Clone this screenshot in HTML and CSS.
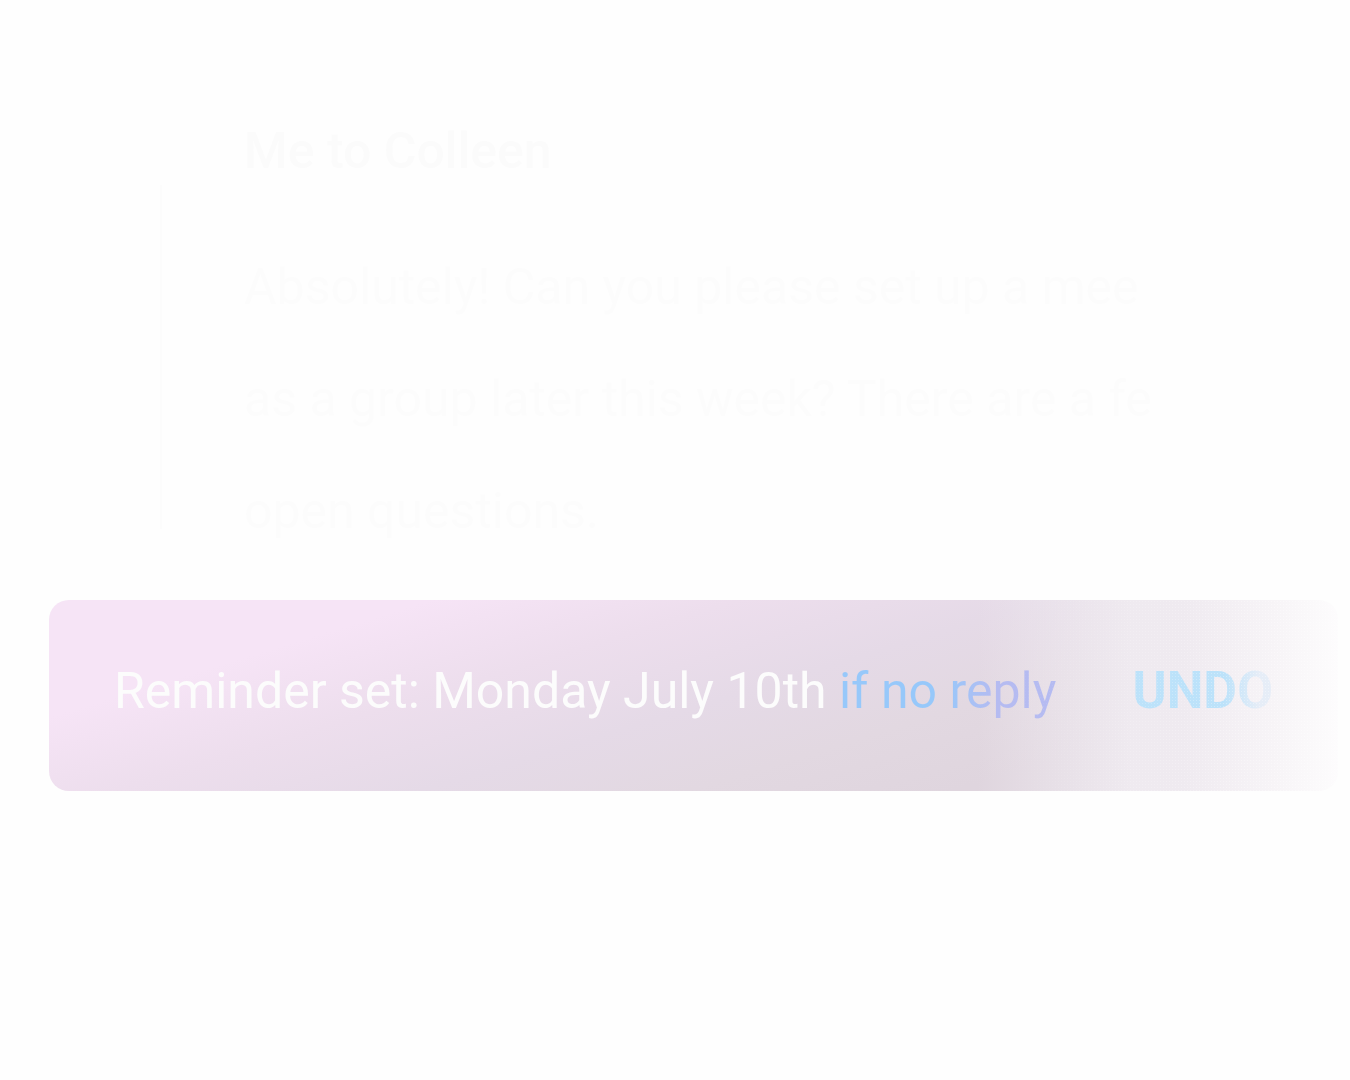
FILE: index.html
```
<!DOCTYPE html>
<html lang="en">
<head>
  <meta charset="UTF-8" />
  <title>Reminder set</title>
  <meta name="viewport" content="width=device-width, initial-scale=1.0" />
  <link rel="stylesheet" href="styles.css">
</head>
<body>
  <main class="thread">
    <article class="message">
      <h2>Me to Colleen</h2>
      <div class="message-body">
        <p>Absolutely! Can you please set up a mee</p>
        <p>as a group later this week? There are a fe</p>
        <p>open questions.</p>
      </div>
    </article>

    <div class="toast" role="status">
      <p>Reminder set: Monday July 10th <a href="#">if no reply</a></p>
      <button type="button">UNDO</button>
    </div>
  </main>
</body>
</html>
```

FILE: styles.css
```
* {
  margin: 0;
  padding: 0;
  box-sizing: border-box;
  font-family: Roboto, 'Liberation Sans', sans-serif;
}

body {
  background-color: #fefefe;
  min-height: 100vh;
}

.thread {
  padding: 121px 12px 0 49px;
}

.message {
  margin: 0 180px 0 111px;
  padding-left: 84px;
  /* thread line beside the message */
  background: linear-gradient(#fcfcfc, #fcfcfc) 0 64px / 2px 344px no-repeat;
}

.message h2 {
  font-size: 50px;
  line-height: 60px;
  font-weight: 500;
  color: #fbfbfb;
}

.message-body {
  padding-top: 50px;
  padding-bottom: 33px;
}

.message-body p {
  font-size: 50px;
  line-height: 112px;
  white-space: nowrap;
  color: #fcfcfc;
}

.toast {
  display: flex;
  align-items: center;
  justify-content: space-between;
  height: 191px;
  padding: 0 65px 10px 65px;
  border-radius: 20px;
  position: relative;
  overflow: hidden;
  background:
    linear-gradient(to right, transparent 72%, #efeaf0 84%, #efeaf0 88%, #f7f4f7 95%, #fdfcfd),
    linear-gradient(163deg, #f6e4f6 20%, #eddeed 36%, #e5dae7 52%, #e2d8e1 66%, #dfd5de 80%);
}

/* fine grain on the faded end */
.toast::after {
  content: '';
  position: absolute;
  inset: 0;
  pointer-events: none;
  background: radial-gradient(circle, #ffffff 1px, transparent 1px) 0 0 / 3px 3px;
  -webkit-mask-image: linear-gradient(to right, transparent 73%, rgba(0, 0, 0, 0.4) 96%);
  mask-image: linear-gradient(to right, transparent 73%, rgba(0, 0, 0, 0.4) 96%);
}

.toast p {
  font-size: 50px;
  line-height: 60px;
  white-space: nowrap;
  color: #fcfcfc;
}

.toast a {
  text-decoration: none;
  color: #97c8fa;
  background: linear-gradient(to right, #97c8fa 48%, #b5bbf1 72%);
  -webkit-background-clip: text;
  background-clip: text;
  -webkit-text-fill-color: transparent;
}

.toast button {
  border: none;
  font-size: 52px;
  line-height: 60px;
  font-weight: 700;
  color: #bce2fa;
  background: linear-gradient(to right, #bce2fa 65%, #e6edf7 90%);
  -webkit-background-clip: text;
  background-clip: text;
  -webkit-text-fill-color: transparent;
  cursor: pointer;
}
```
